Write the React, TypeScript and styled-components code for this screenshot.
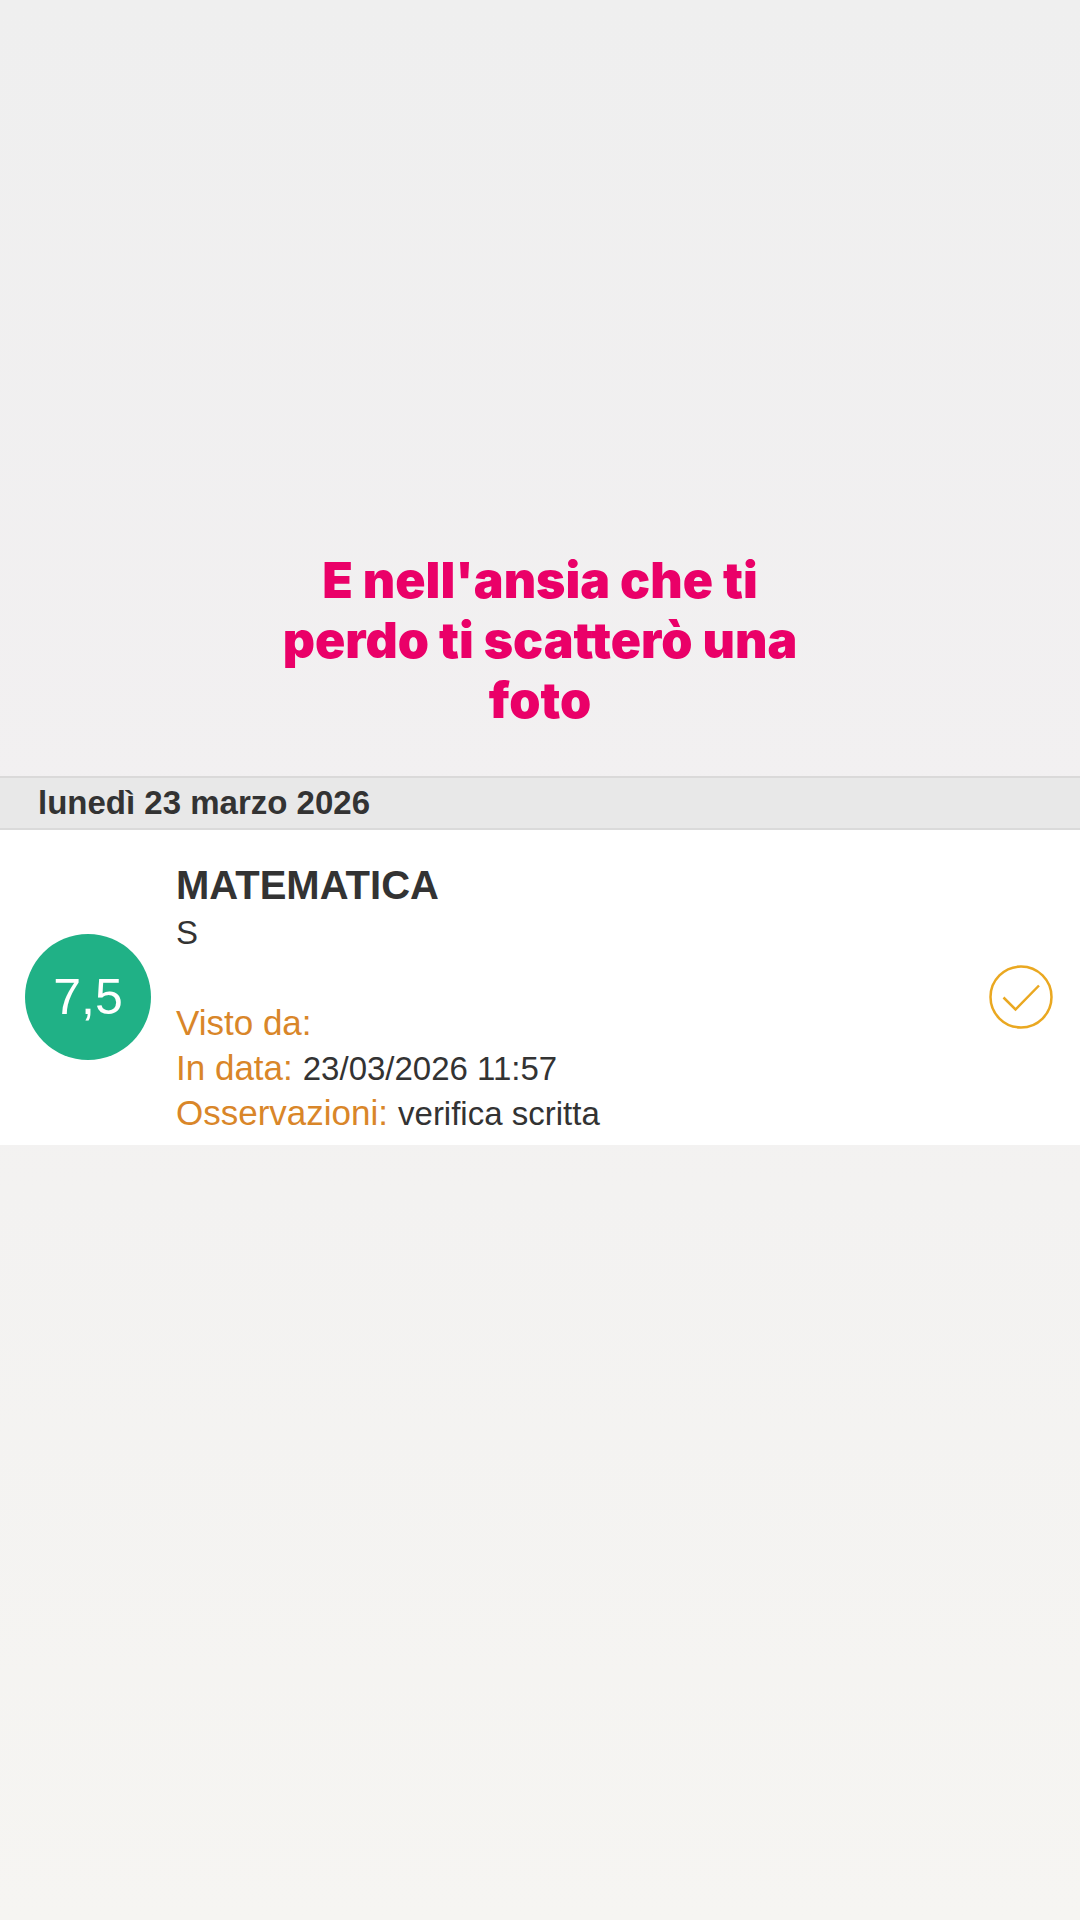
import React from "react";
import styled, { createGlobalStyle } from "styled-components";

const GlobalStyle = createGlobalStyle`
  * { box-sizing: border-box; }
  body {
    margin: 0;
    min-height: 100vh;
    background: #f3f2f1;
    font-family: "Liberation Sans", Arial, Helvetica, sans-serif;
    color: #333333;
  }
`;

const Page = styled.main`
  min-height: 100vh;
  background: linear-gradient(180deg, #efefef 0%, #f2f0f1 42%, #f3f2f1 62%, #f6f5f2 100%);
`;

const CaptionArea = styled.header`
  display: flex;
  justify-content: center;
  padding: 550px 24px 46px;
`;

const Caption = styled.h1`
  margin: 0;
  max-width: 540px;
  font-family: Inter, sans-serif;
  font-size: 50px;
  line-height: 60px;
  font-weight: 900;
  font-variant-ligatures: none;
  text-align: center;
  color: #ea0068;
`;

const DateBar = styled.h2`
  margin: 0;
  padding: 0 38px;
  border-top: 2px solid #dad9d9;
  border-bottom: 2px solid #dadada;
  background: #e8e8e8;
  font-size: 33px;
  line-height: 50px;
  font-weight: 700;
`;

const Entry = styled.article`
  display: flex;
  align-items: center;
  gap: 25px;
  padding: 29px 27px 10px 25px;
  background: #ffffff;
`;

const Grade = styled.div`
  display: flex;
  flex: none;
  align-items: center;
  justify-content: center;
  width: 126px;
  height: 126px;
  border-radius: 50%;
  background: #20b186;
  color: #ffffff;
  font-size: 50px;
`;

const Details = styled.div`
  flex: 1;
  min-width: 0;
  padding-top: 6px;
  line-height: 45px;
`;

const Subject = styled.h3`
  margin: 0 0 4px;
  font-size: 40px;
  line-height: 41px;
  font-weight: 700;
`;

const Kind = styled.p`
  margin: 0 0 45px;
  font-size: 33px;
`;

const Facts = styled.dl`
  margin: 0;
`;

const Fact = styled.div`
  display: flex;
  align-items: baseline;
  gap: 10px;
`;

const Label = styled.dt`
  font-size: 35px;
  color: #d98629;
`;

const Value = styled.dd`
  margin: 0;
  font-size: 33px;
  line-height: 40px;
`;

const SeenIcon = styled.svg`
  flex: none;
  width: 64px;
  height: 64px;
  fill: none;
  stroke: #eaa821;
  stroke-width: 2.5;
`;

const facts = [
  { label: "Visto da:", value: "" },
  { label: "In data:", value: "23/03/2026 11:57" },
  { label: "Osservazioni:", value: "verifica scritta" },
];

export default function App() {
  return (
    <Page>
      <GlobalStyle />
      <CaptionArea>
        <Caption>E nell'ansia che ti perdo ti scatterò una foto</Caption>
      </CaptionArea>
      <section>
        <DateBar>lunedì 23 marzo 2026</DateBar>
        <Entry>
          <Grade>7,5</Grade>
          <Details>
            <Subject>MATEMATICA</Subject>
            <Kind>S</Kind>
            <Facts>
              {facts.map((fact) => (
                <Fact key={fact.label}>
                  <Label>{fact.label}</Label>
                  <Value>{fact.value}</Value>
                </Fact>
              ))}
            </Facts>
          </Details>
          <SeenIcon viewBox="0 0 64 64" role="img" aria-label="Visto">
            <circle cx="32" cy="32" r="30.5" />
            <path d="M14.5 32.5 L26.5 44.5 L50 20.5" />
          </SeenIcon>
        </Entry>
      </section>
    </Page>
  );
}
